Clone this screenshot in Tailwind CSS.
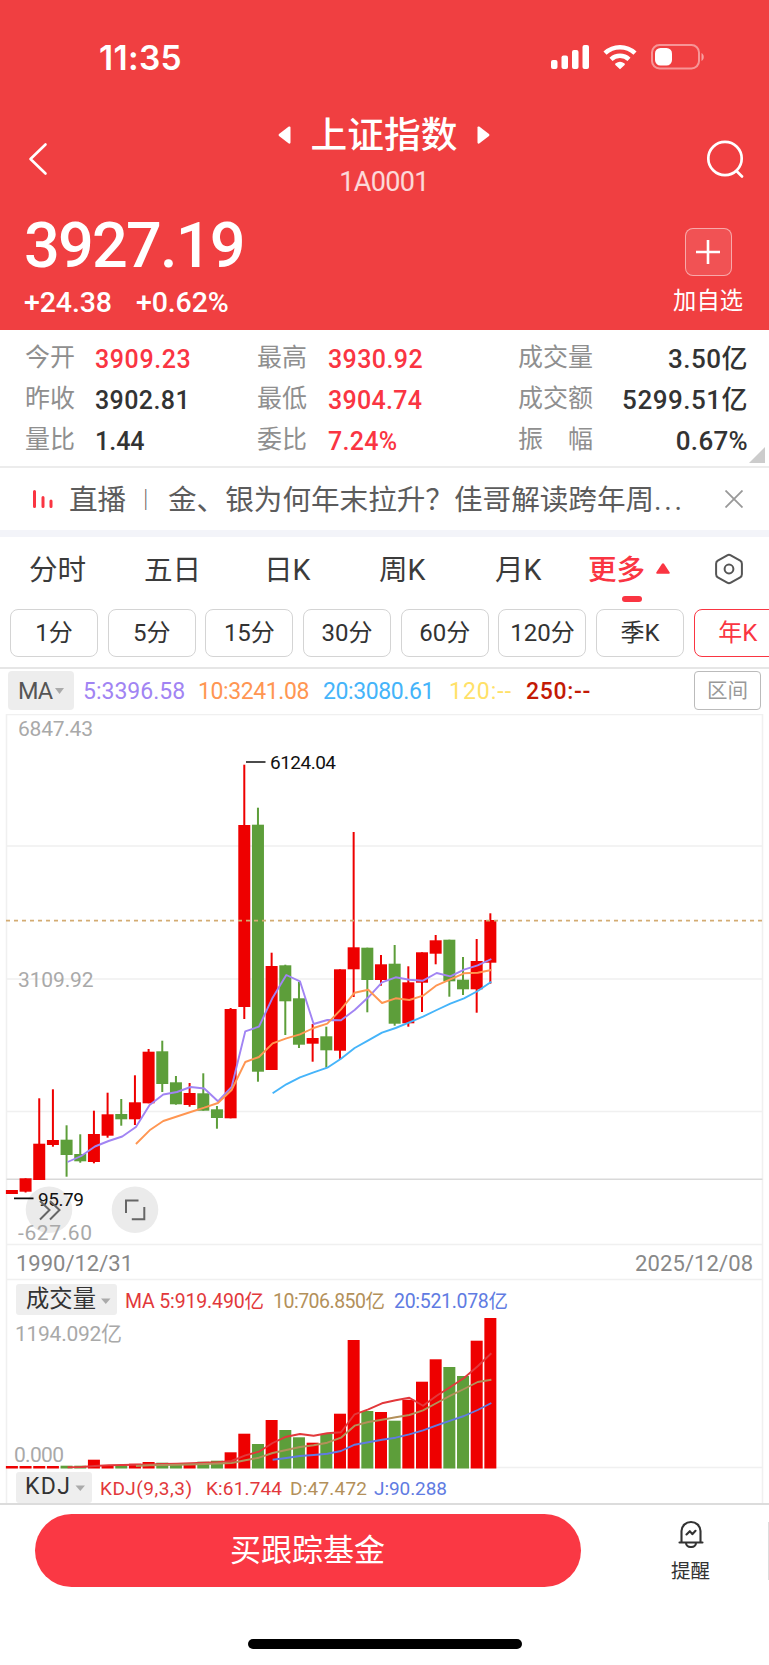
<!DOCTYPE html>
<html lang="zh-CN">
<head>
  <meta charset="UTF-8">
  <meta name="viewport" content="width=device-width, initial-scale=1.0">
  <title>上证指数 1A0001</title>
  <script src="https://cdn.jsdelivr.net/npm/@tailwindcss/browser@4"></script>
</head>
<body class="w-[769px] h-[1665px] overflow-hidden bg-white font-[Roboto,'Noto_Sans_CJK_SC',sans-serif] text-[#333]">
  <!-- Header -->
  <header class="h-[330px] bg-[#f03f41] text-white">
    <div class="h-[110px] pl-[99px] pr-[65px] flex items-center justify-between">
      <span class="pt-2 font-[Inter,sans-serif] font-semibold text-[33.5px] leading-none tracking-[0.3px]">11:35</span>
      <svg class="w-[154px] h-[26px] mt-[4px]" viewBox="0 0 154 26" fill="none">
        <g fill="#fff">
          <rect x="1" y="16" width="6.5" height="9" rx="2"/>
          <rect x="11.5" y="11.5" width="6.5" height="13.5" rx="2"/>
          <rect x="22" y="6" width="6.5" height="19" rx="2"/>
          <rect x="32.5" y="1" width="6.5" height="24" rx="2"/>
          <path d="M70 25.3l-4.6-4.4q-.8-.9.3-1.6a7.5 7.5 0 0 1 8.600 0q1.100.7.300 1.600z"/>
        </g>
        <path d="M61 15.300a13.300 13.300 0 0 1 18 0M55 9.200a21.800 21.800 0 0 1 30 0" stroke="#fff" stroke-width="4.500"/>
        <rect x="102" y="1" width="47" height="23.500" rx="7.500" stroke="#fff" stroke-opacity=".45" stroke-width="2"/>
        <rect x="105" y="4" width="17" height="17.500" rx="5.500" fill="#fff"/>
        <path d="M151.500 9v8c3-1.500 3-6.500 0-8z" fill="#fff" fill-opacity=".5"/>
      </svg>
    </div>

    <div class="h-[96px] px-[24px] flex justify-between">
      <svg class="w-7 h-[34px] mt-[32px]" viewBox="0 0 28 34" fill="none" stroke="#fff" stroke-width="2.600" stroke-linecap="round" stroke-linejoin="round"><path d="M21.500 2.500L6.500 17l15 14.500"/></svg>
      <div class="ml-[11px] flex flex-col items-center">
        <div class="flex items-center gap-[20px] h-[52px]">
          <svg class="w-[13px] h-[18px] -mt-0.5" viewBox="0 0 13 18" fill="#fff"><path d="M12.500 1.500v15q0 1.500-1.700 1L1 10Q0 9 1 8L10.800.5q1.700-.5 1.700 1z"/></svg>
          <h1 class="text-[36.7px] leading-[52px] font-medium">上证指数</h1>
          <svg class="w-[13px] h-[18px] -mt-0.5" viewBox="0 0 13 18" fill="#fff"><path d="M.5 1.500v15q0 1.500 1.700 1L12 10q1-1 0-2L2.200.5Q.5 0 .5 1.500z"/></svg>
        </div>
        <p class="mt-[5px] text-[27px] leading-[30px] text-white/80 tracking-[-0.7px]">1A0001</p>
      </div>
      <svg class="w-10 h-10 mt-[29px]" viewBox="0 0 40 40" fill="none" stroke="#fff" stroke-width="2.700" stroke-linecap="round"><circle cx="20" cy="19.500" r="16.700"/><path d="M31.500 32l5.500 5.500"/></svg>
    </div>

    <div class="h-[124px] pl-[24px] pr-[26px] flex justify-between">
      <div>
        <div class="mt-[8px] text-[63px] leading-[64px] font-medium tracking-[-1.8px]">3927.19</div>
        <div class="mt-[10px] flex gap-[24px] text-[28.5px] leading-[30px] font-medium">
          <span class="tracking-[-0.1px]">+24.38</span>
          <span class="tracking-[-0.1px]">+0.62%</span>
        </div>
      </div>
      <div class="pt-[22px] flex flex-col items-center">
        <div class="w-[47px] h-[48px] rounded-lg border-[1.5px] border-white/50 bg-white/10 flex items-center justify-center">
          <svg class="w-6 h-6" viewBox="0 0 24 24" stroke="#fff" stroke-width="2.600"><path d="M12 0v24M0 12h24"/></svg>
        </div>
        <span class="mt-[10px] text-[23.3px] leading-[30px]">加自选</span>
      </div>
    </div>
  </header>

  <!-- Quote details -->
  <section class="relative h-[138px] pt-[7px] border-b-2 border-[#ececec] text-[25px] leading-[41px]">
    <div class="grid grid-cols-[70px_162px_71px_190px_80px_1fr] pl-[25px] pr-[21px]">
      <span class="text-[#8f8f8f]">今开</span><span class="font-medium text-[#fa3542] pt-0.5 tracking-[0.6px]">3909.23</span>
      <span class="text-[#8f8f8f]">最高</span><span class="font-medium text-[#fa3542] pt-0.5 tracking-[0.4px]">3930.92</span>
      <span class="text-[#8f8f8f]">成交量</span><span class="font-medium text-right pt-0.5 text-[26px] tracking-[0.5px]">3.50亿</span>
    </div>
    <div class="-mt-0.5 grid grid-cols-[70px_162px_71px_190px_80px_1fr] pl-[25px] pr-[21px]">
      <span class="text-[#8f8f8f]">昨收</span><span class="font-medium pt-0.5 tracking-[0.4px]">3902.81</span>
      <span class="text-[#8f8f8f]">最低</span><span class="font-medium text-[#fa3542] pt-0.5 tracking-[0.3px]">3904.74</span>
      <span class="text-[#8f8f8f]">成交额</span><span class="font-medium text-right pt-0.5 -ml-6 text-[26px] tracking-[0.5px]">5299.51亿</span>
    </div>
    <div class="-mt-0.5 grid grid-cols-[70px_162px_71px_190px_80px_1fr] pl-[25px] pr-[21px]">
      <span class="text-[#8f8f8f]">量比</span><span class="font-medium pt-0.5">1.44</span>
      <span class="text-[#8f8f8f]">委比</span><span class="font-medium text-[#fa3542] pt-0.5 tracking-[0.3px]">7.24%</span>
      <span class="text-[#8f8f8f]">振　幅</span><span class="font-medium text-right pt-0.5 text-[26px] tracking-[0.3px]">0.67%</span>
    </div>
    <svg class="absolute right-[4px] bottom-[3px] w-4 h-4" viewBox="0 0 16 16" fill="#ccc"><path d="M16 0v16H0z"/></svg>
  </section>

  <!-- Live news -->
  <section class="h-[62px] pt-[2px] pl-[32px] pr-[26px] flex items-center">
    <svg class="w-[22px] h-[20px] mr-[15px] -mt-0.5" viewBox="0 0 22 20" stroke="#fa3542" stroke-width="3" stroke-linecap="round"><path d="M2.500 2.500v15M11 8.500v9M19 12v5.500"/></svg>
    <p class="w-[99px] flex items-center text-[28.6px] leading-[40px] text-[#5c5c5c] whitespace-nowrap">直播<span class="ml-[9px] text-[21px] font-medium">｜</span></p>
    <p class="text-[28.6px] leading-[40px] text-[#5c5c5c] whitespace-nowrap">金、银为何年末拉升？佳哥解读跨年周<span class="tracking-[2.6px]">...</span></p>
    <svg class="w-[18px] h-[18px] ml-auto -mt-0.5" viewBox="0 0 18 18" stroke="#999" stroke-width="1.800"><path d="M.5.5l17 17M17.500.5l-17 17"/></svg>
  </section>
  <div class="h-[7px] bg-[#f3f4f9]"></div>

  <!-- Period tabs -->
  <nav class="h-[132px] border-b-2 border-[#e6e6e6]">
    <div class="h-[66px] pl-[29px] flex items-center text-[28.6px] leading-[40px] text-[#3b3b3b]">
      <span class="w-[115px]">分时</span>
      <span class="w-[120px]">五日</span>
      <span class="w-[115px]">日K</span>
      <span class="w-[116px]">周K</span>
      <span class="w-[93px]">月K</span>
      <span class="relative w-[127px] flex items-center gap-[11px] font-medium text-[#fa3542]">更多
        <svg class="w-[14px] h-[11px] -mt-[3px]" viewBox="0 0 14 11" fill="#fa3542"><path d="M6 .8q1-1.300 2 0l5.600 8.500q.7 1.400-.8 1.400H1.200q-1.500 0-.8-1.400z"/></svg>
        <i class="absolute left-[34px] top-[46px] w-[20px] h-[6px] rounded-[3px] bg-[#fa3542]"></i>
      </span>
      <svg class="w-[28px] h-[32px] -mt-0.5" viewBox="0 0 28 32" fill="none" stroke="#555" stroke-width="2" stroke-linejoin="round"><path d="M12.200 2.300q1.800-1 3.600 0l9.400 5.400q1.700 1 1.700 3v10.600q0 2-1.700 3l-9.400 5.400q-1.800 1-3.600 0l-9.400-5.400q-1.700-1-1.700-3V10.700q0-2 1.700-3z"/><circle cx="14" cy="16" r="4.400"/></svg>
    </div>
    <div class="pl-[10px] pt-[6px] flex gap-[9.7px] text-[24px] text-[#333] overflow-hidden">
      <button class="shrink-0 w-[88px] h-[48px] pb-px rounded-[8px] border-[1.5px] border-[#d4d4d4]">1分</button>
      <button class="shrink-0 w-[88px] h-[48px] pb-px rounded-[8px] border-[1.5px] border-[#d4d4d4]">5分</button>
      <button class="shrink-0 w-[88px] h-[48px] pb-px rounded-[8px] border-[1.5px] border-[#d4d4d4]">15分</button>
      <button class="shrink-0 w-[88px] h-[48px] pb-px rounded-[8px] border-[1.5px] border-[#d4d4d4]">30分</button>
      <button class="shrink-0 w-[88px] h-[48px] pb-px rounded-[8px] border-[1.5px] border-[#d4d4d4]">60分</button>
      <button class="shrink-0 w-[88px] h-[48px] pb-px rounded-[8px] border-[1.5px] border-[#d4d4d4] whitespace-nowrap">120分</button>
      <button class="shrink-0 w-[88px] h-[48px] pb-px rounded-[8px] border-[1.5px] border-[#d4d4d4]">季K</button>
      <button class="shrink-0 w-[88px] h-[48px] pb-px rounded-[8px] border-[1.5px] border-[#fa3542] text-[#fa3542]">年K</button>
    </div>
  </nav>

  <!-- MA legend -->
  <section class="h-[45px] pt-[2px] pl-[8px] pr-[8px] flex items-start">
    <div class="w-[66px] h-[39px] mr-[9px] pl-[10px] flex items-center gap-[3px] rounded bg-[#ededed] text-[23.5px] text-[#555]">
      <span class="tracking-[-1px] pt-[3px]">MA</span>
      <svg class="w-[9px] h-[6px]" viewBox="0 0 9 6" fill="#aaa"><path d="M0 0h9L4.500 6z"/></svg>
    </div>
    <div class="h-[43px] flex items-center text-[23px]">
      <span class="w-[115px] text-[#a184f3]">5:3396.58</span>
      <span class="w-[125px] text-[#ff9652] tracking-[-0.4px]">10:3241.08</span>
      <span class="w-[126px] text-[#45b4fa] tracking-[-0.4px]">20:3080.61</span>
      <span class="w-[77px] text-[#ffe168] tracking-[1px]">120:--</span>
      <span class="font-medium text-[#c31a05] tracking-[0.7px]">250:--</span>
    </div>
    <div class="ml-auto w-[67px] h-[39px] rounded border-[1.5px] border-[#bbb] text-center text-[20.5px] leading-[38px] text-[#999]">区间</div>
  </section>

  <!-- Candles, volume and indicator panes -->
  <svg id="chart" class="block w-[769px] h-[789px]" viewBox="0 714 769 789">
    <g fill="none" stroke="#f0f0f0" stroke-width="1.500">
      <path d="M6.500 1503V714.500h756V1503"/>
      <path d="M6.500 846h756M6.500 979h756M6.500 1111.500h756M6.500 1244.500h756M6.500 1279.500h756M6.500 1467.500h756"/>
      <path d="M6.500 1179.300h756" stroke="#d9d9d9"/>
    </g>
    <circle cx="49" cy="1209.700" r="23.300" fill="#ebebeb"/>
    <circle cx="135" cy="1209.700" r="23.300" fill="#ebebeb"/>
    <g fill="#a9a9a9" font-size="21">
      <text x="18" y="735.500" textLength="75">6847.43</text>
      <text x="18" y="987" textLength="75.500">3109.92</text>
      <text x="18" y="1239.500" textLength="74">-627.60</text>
      <text x="15" y="1341" textLength="107">1194.092亿</text>
      <text x="14" y="1461.500" textLength="50">0.000</text>
    </g>
    <g id="plot"></g>
    <path d="M6 920.700h756" stroke="#d3ab72" stroke-width="1.800" stroke-dasharray="4 4"/>
    <path d="M246 762h19.500M14 1198.300h19.500" stroke="#111" stroke-width="1.700"/>
    <g fill="#111" font-size="19">
      <text x="270" y="769" textLength="66">6124.04</text>
      <text x="38" y="1206" textLength="46">95.79</text>
    </g>
    <g fill="none" stroke="#666" stroke-width="2">
      <path d="M40 1201l9.500 9-9.500 9.500M50 1201l9.500 9-9.500 9.500"/>
      <path d="M126 1213v-12.500h12.500M144.300 1207v12.300h-12.500"/>
    </g>
    <g fill="#888" font-size="22">
      <text x="16" y="1271" textLength="117">1990/12/31</text>
      <text x="635" y="1271" textLength="118">2025/12/08</text>
    </g>

    <rect x="16" y="1284" width="101" height="31" rx="3" fill="#eee"/>
    <text x="26" y="1307" font-size="23.300" fill="#333" textLength="70">成交量</text>
    <path d="M101 1298.500h9.500l-4.700 5.500z" fill="#aaa"/>
    <g font-size="19.500">
      <text x="125" y="1307.500" fill="#e2383b" textLength="139">MA 5:919.490亿</text>
      <text x="273" y="1307.500" fill="#b3905a" textLength="112">10:706.850亿</text>
      <text x="394" y="1307.500" fill="#607be2" textLength="114">20:521.078亿</text>
    </g>

    <rect x="16" y="1472" width="76" height="31" rx="3" fill="#eee"/>
    <text x="25" y="1493.500" font-size="23" fill="#333" textLength="45">KDJ</text>
    <path d="M75.500 1485.500h9.500l-4.700 5.500z" fill="#aaa"/>
    <g font-size="19">
      <text x="100" y="1495" fill="#e2383b" textLength="92">KDJ(9,3,3)</text>
      <text x="206" y="1495" fill="#e2383b" textLength="76">K:61.744</text>
      <text x="290" y="1495" fill="#b3905a" textLength="77">D:47.472</text>
      <text x="374" y="1495" fill="#607be2" textLength="73">J:90.288</text>
    </g>
  </svg>

  <!-- Bottom actions -->
  <footer class="h-[162px] border-t-2 border-[#dcdcdc]">
    <div class="pt-[9px] pl-[34.5px] flex">
      <button class="w-[546px] h-[73px] rounded-full bg-[#fa3844] text-white text-[31px] leading-[73px]">买跟踪基金</button>
      <div class="ml-[73px] mt-[6px] w-[74px] flex flex-col items-center">
        <svg class="w-[28px] h-[28px]" viewBox="0 0 28 28" fill="none" stroke="#333" stroke-width="2.100" stroke-linecap="round" stroke-linejoin="round"><path d="M4.500 21.500V11a9.500 9 0 0 1 19 0v10.500M2.500 22.500h23M9 23a5 4 0 0 0 10 0M9.500 14.500l3.300-3.300 2.500 3 3.200-3.400"/></svg>
        <span class="mt-[10px] text-[19.5px] leading-[28px]">提醒</span>
      </div>
      <div class="ml-auto mt-[8px] w-[1px] h-[58px] bg-[#ddd]"></div>
    </div>
    <div class="mx-auto mt-[52px] w-[274px] h-[10px] rounded-full bg-black"></div>
  </footer>

  <script>
    // direction, body top, body bottom, high, low, volume top
    const bars = [
      ['u', 1190, 1194, 1190, 1194, 1466], ['u', 1178.3, 1191.7, 1178.3, 1192.5, 1466],
      ['u', 1143.7, 1180, 1098.3, 1180, 1466], ['u', 1140, 1145, 1089.3, 1146.7, 1466],
      ['d', 1139.7, 1155, 1125.3, 1176.7, 1465.7], ['d', 1154, 1161.3, 1134.3, 1162.7, 1465.7],
      ['u', 1134, 1162, 1110.7, 1163.3, 1459.7], ['u', 1114.3, 1135.7, 1092.7, 1137.7, 1465],
      ['d', 1114, 1119.3, 1099, 1125.7, 1465.3], ['u', 1102.3, 1119.3, 1075.3, 1125, 1463.7],
      ['u', 1051.7, 1103.3, 1049, 1103.3, 1462], ['d', 1051.3, 1084, 1040.7, 1092, 1462.7],
      ['d', 1082.3, 1104.3, 1076, 1104.7, 1464], ['u', 1093, 1105, 1083, 1106.7, 1463],
      ['d', 1093.3, 1110.7, 1073.3, 1110.7, 1461.7], ['d', 1109.3, 1118, 1106, 1128.7, 1460.7],
      ['u', 1009, 1118.3, 1008, 1118.3, 1452.3], ['u', 825, 1007, 764.7, 1019, 1433.7],
      ['d', 824.7, 1071.7, 807.7, 1081.7, 1444], ['u', 966, 1070, 952.7, 1070, 1420],
      ['d', 965.3, 1001.3, 964.7, 1035, 1430], ['d', 998.3, 1044.7, 982, 1048, 1437.3],
      ['u', 1038, 1043.7, 1024, 1061.7, 1442.7], ['d', 1036.3, 1050.3, 1026.7, 1067.7, 1434],
      ['u', 969.3, 1050.7, 969.3, 1059, 1413.7], ['u', 947.3, 969.3, 832, 997, 1340],
      ['d', 947.7, 980, 947.7, 1012.3, 1411], ['u', 964.3, 980, 955, 985.7, 1412],
      ['d', 963.7, 1023.7, 945, 1025.7, 1420.7], ['u', 982.3, 1023.3, 966.3, 1026.7, 1399.7],
      ['u', 952.3, 982.7, 952.3, 1012, 1381.7], ['u', 940.3, 953.7, 935, 964.3, 1359.3],
      ['d', 939.7, 981.3, 939.7, 996.7, 1367], ['d', 979.7, 989.3, 957, 995, 1376],
      ['u', 961, 989.3, 939, 1012.7, 1340.7], ['u', 920, 962.7, 913.3, 983.7, 1318]
    ];

    // color, index of the first bar, y of each point
    const lines = [
      ['#a184f3', 4, [1162, 1156, 1146.5, 1141, 1136.5, 1127, 1105, 1094.5, 1092, 1087, 1088.5, 1101.3, 1087, 1031.3, 1026.7, 997.7, 975, 981.3, 1024, 1020, 1020.3, 1010, 997.3, 982.3, 977.3, 979.7, 980.7, 973, 976.3, 969.7, 965.3, 959]],
      ['#ff9652', 9, [1144, 1130.3, 1121, 1116.5, 1112, 1107.7, 1103, 1090, 1062, 1057, 1043.3, 1038.3, 1034.3, 1028, 1023.7, 1009.3, 992.7, 989.7, 1003, 998.3, 1000, 995.7, 985.3, 979.3, 973.3, 972.7, 970]],
      ['#45b4fa', 19, [1093.3, 1084.3, 1077.3, 1072.3, 1067.7, 1058.7, 1048, 1040.3, 1032.7, 1028, 1022.3, 1016.7, 1010, 1003.7, 998.3, 991, 981.7]],
      ['#e2383b', 4, [1467.3, 1467, 1466, 1465.2, 1465, 1464.8, 1464.5, 1464, 1463.7, 1463.3, 1462.8, 1462.3, 1461, 1455.3, 1451.7, 1443, 1436.7, 1434, 1435.7, 1433.3, 1432.3, 1414.3, 1409.3, 1403.3, 1400.3, 1397.7, 1405.7, 1395.7, 1387, 1378, 1366.3, 1353.3]],
      ['#b3905a', 9, [1466, 1465.3, 1465, 1464.7, 1464.5, 1464, 1463.5, 1463, 1460.3, 1457.7, 1453, 1450, 1447, 1445.3, 1442.7, 1437.7, 1425.7, 1422, 1419.7, 1417.3, 1415, 1410.3, 1403, 1395.7, 1389, 1382, 1379.7]],
      ['#607be2', 19, [1459.7, 1458, 1456, 1455, 1453.7, 1451, 1444.7, 1442.3, 1439.7, 1437.7, 1434.3, 1430.3, 1425.3, 1420.7, 1416, 1410, 1403]]
    ];

    const step = 13.67;
    const base = 1468.5;
    let out = '';

    bars.forEach(([dir, top, bottom, high, low, vol], i) => {
      const x = 11.9 + step * i;
      const color = dir === 'u' ? '#ee0000' : '#5d9e3a';
      out += `<rect x="${x - 1}" y="${high}" width="2" height="${low - high}" fill="${color}"/>`;
      out += `<rect x="${x - 6}" y="${top}" width="12" height="${bottom - top}" fill="${color}"/>`;
      out += `<rect x="${x - 6}" y="${vol}" width="12" height="${base - vol}" fill="${color}"/>`;
    });

    lines.forEach(([color, start, ys]) => {
      const points = ys.map((y, k) => `${12.9 + step * (start + k)},${y}`).join(' ');
      out += `<polyline points="${points}" fill="none" stroke="${color}" stroke-width="1.9" stroke-linejoin="round"/>`;
    });

    document.getElementById('plot').innerHTML = out;
  </script>
</body>
</html>
